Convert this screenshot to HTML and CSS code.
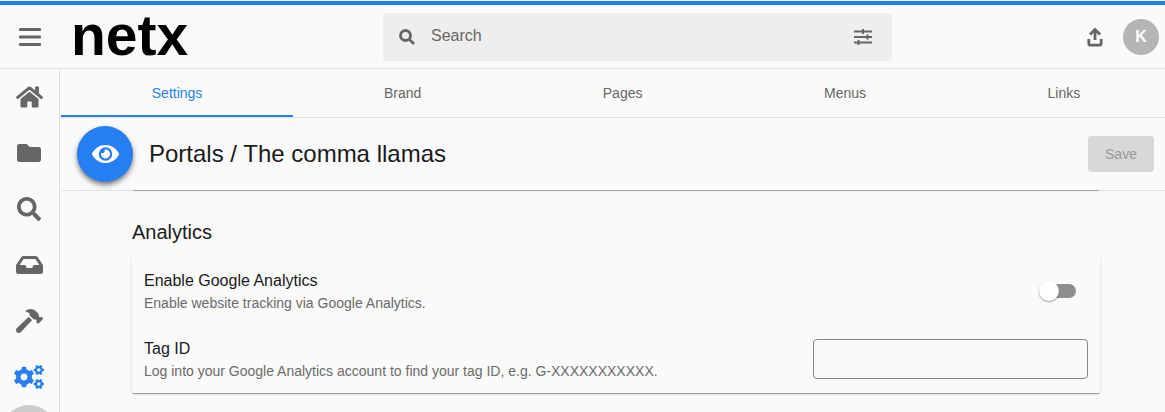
FILE: index.html
```html
<!DOCTYPE html>
<html lang="en">
<head>
    <meta charset="UTF-8">
    <meta name="viewport" content="width=device-width, initial-scale=1.0">
    <title>Portals / The comma llamas</title>
    <link rel="stylesheet" href="styles.css">
</head>
<body>
    <header class="topbar">
        <div class="brand">
            <button class="icon-btn menu-btn" aria-label="Menu">
                <svg width="22" height="20" viewBox="0 0 22 20"><rect y="1" width="22" height="3" rx="1"/><rect y="8.5" width="22" height="3" rx="1"/><rect y="16" width="22" height="3" rx="1"/></svg>
            </button>
            <a class="logo" href="#home">netx</a>
        </div>
        <div class="search">
            <svg class="search-icon" width="16" height="16" viewBox="0 0 16 16"><circle cx="6.500" cy="6.500" r="5"/><path d="M10.200 10.200l4.800 4.800"/></svg>
            <input type="text" placeholder="Search" aria-label="Search">
            <button class="icon-btn" aria-label="Filters">
                <svg width="18" height="16" viewBox="0 0 18 16"><path d="M0 1.500h18v2H0zM0 7h18v2H0zM0 12.500h18v2H0zM8 0h2v5H8zM12.500 5.500h2v5h-2zM3.500 11h2v5h-2z"/></svg>
            </button>
        </div>
        <div class="user">
            <button class="icon-btn" aria-label="Upload">
                <svg class="stroke-icon" width="16" height="20" viewBox="0 0 16 20"><path d="M8 13V3M3 7.500L8 2.500l5 5"/><path d="M1.800 12v4.200a2 2 0 0 0 2 2h8.400a2 2 0 0 0 2-2V12"/></svg>
            </button>
            <button class="avatar">K</button>
        </div>
    </header>
    <div class="layout">
        <nav class="sidebar">
            <a href="#home" aria-label="Home"><svg width="27" height="24" viewBox="0 0 576 512"><path d="M280.370 148.260L96 300.110V464a16 16 0 0 0 16 16l112.060-.29a16 16 0 0 0 15.920-16V368a16 16 0 0 1 16-16h64a16 16 0 0 1 16 16v95.640a16 16 0 0 0 16 16.050L464 480a16 16 0 0 0 16-16V300L295.670 148.260a12.190 12.190 0 0 0-15.300 0zM571.600 251.470L488 182.560V44.050a12 12 0 0 0-12-12h-56a12 12 0 0 0-12 12v72.610L318.470 43a48 48 0 0 0-61 0L4.340 251.470a12 12 0 0 0-1.600 16.900l25.500 31A12 12 0 0 0 45.150 301l235.220-193.740a12.190 12.190 0 0 1 15.300 0L530.900 301a12 12 0 0 0 16.900-1.600l25.500-31a12 12 0 0 0-1.700-16.930z"/></svg></a>
            <a href="#folders" aria-label="Folders"><svg width="24" height="24" viewBox="0 0 512 512"><path d="M464 128H272l-64-64H48C21.490 64 0 85.490 0 112v288c0 26.510 21.490 48 48 48h416c26.510 0 48-21.490 48-48V176c0-26.510-21.490-48-48-48z"/></svg></a>
            <a href="#search" aria-label="Search"><svg width="24" height="24" viewBox="0 0 512 512"><path d="M505 442.700L405.300 343c-4.500-4.500-10.600-7-17-7H372c27.600-35.300 44-79.700 44-128C416 93.100 322.900 0 208 0S0 93.100 0 208s93.100 208 208 208c48.300 0 92.700-16.400 128-44v16.300c0 6.400 2.500 12.500 7 17l99.700 99.700c9.400 9.400 24.600 9.400 33.900 0l28.300-28.300c9.400-9.400 9.400-24.600.1-34zM208 336c-70.700 0-128-57.200-128-128 0-70.700 57.200-128 128-128 70.700 0 128 57.200 128 128 0 70.700-57.200 128-128 128z"/></svg></a>
            <a href="#inbox" aria-label="Inbox"><svg width="27" height="24" viewBox="0 0 576 512"><path d="M567.938 243.908L462.250 85.374A48.003 48.003 0 0 0 422.311 64H153.689a48 48 0 0 0-39.938 21.374L8.062 243.908A47.994 47.994 0 0 0 0 270.533V400c0 26.510 21.490 48 48 48h480c26.510 0 48-21.490 48-48V270.533a47.994 47.994 0 0 0-8.062-26.625zM162.252 128h251.497l85.333 128H376l-32 64H232l-32-64H76.918l85.334-128z"/></svg></a>
            <a href="#tools" aria-label="Tools"><svg width="27" height="24" viewBox="0 0 576 512"><path d="M571.310 193.940l-22.630-22.630c-6.250-6.250-16.380-6.250-22.630 0l-11.310 11.310-28.900-28.900c5.630-21.310.36-44.900-16.350-61.610l-45.250-45.250c-62.480-62.480-163.790-62.480-226.280 0l90.510 45.250v18.750c0 16.970 6.740 33.250 18.750 45.250l49.140 49.140c16.710 16.710 40.300 21.980 61.610 16.350l28.900 28.900-11.310 11.310c-6.250 6.250-6.250 16.380 0 22.630l22.630 22.630c6.250 6.250 16.380 6.250 22.630 0l90.510-90.510c6.230-6.240 6.230-16.370-.02-22.620zm-286.720-15.200c-3.700-3.700-6.840-7.790-9.850-11.950L19.640 404.960c-25.570 23.880-26.260 64.190-1.530 88.930s65.050 24.050 88.920-1.530l238.130-255.070c-3.960-2.910-7.900-5.870-11.440-9.410l-49.130-49.140z"/></svg></a>
            <a href="#settings" class="active" aria-label="Settings">
                <svg width="30" height="24" viewBox="0 0 30 24">
                    <defs>
                        <g id="gear">
                            <circle r="5.700" fill="none" stroke="currentColor" stroke-width="4.600"/>
                            <path id="teeth" d="M-2.600-6.500L-2.100-10.300H2.100L2.600-6.500zM-2.600 6.500L-2.100 10.300H2.100L2.600 6.500z"/>
                            <use href="#teeth" transform="rotate(60)"/>
                            <use href="#teeth" transform="rotate(120)"/>
                        </g>
                    </defs>
                    <use href="#gear" transform="translate(10 12)"/>
                    <use href="#gear" transform="translate(24.800 5) rotate(30) scale(.5)"/>
                    <use href="#gear" transform="translate(24.800 19) rotate(30) scale(.5)"/>
                </svg>
            </a>
            <a href="#profile" class="profile" aria-label="Profile"></a>
        </nav>
        <main class="main-content">
            <nav class="tabs">
                <a href="#tab-settings" class="active">Settings</a>
                <a href="#tab-brand">Brand</a>
                <a href="#tab-pages">Pages</a>
                <a href="#tab-menus">Menus</a>
                <a href="#tab-links">Links</a>
            </nav>
            <div class="title-bar">
                <button class="preview-btn" aria-label="Preview">
                    <svg width="27" height="24" viewBox="0 0 576 512"><path d="M572.520 241.400C518.290 135.590 410.930 64 288 64S57.680 135.640 3.480 241.410a32.350 32.350 0 0 0 0 29.190C57.710 376.410 165.070 448 288 448s230.320-71.640 284.520-177.410a32.350 32.350 0 0 0 0-29.190zM288 400a144 144 0 1 1 144-144 143.930 143.930 0 0 1-144 144zm0-240a95.310 95.310 0 0 0-25.310 3.790 47.850 47.850 0 0 1-66.900 66.900A95.780 95.780 0 1 0 288 160z"/></svg>
                </button>
                <h1>Portals / The comma llamas</h1>
                <button class="save-btn" disabled>Save</button>
            </div>
            <div class="content">
                <!-- end of the section scrolled under the title bar -->
                <div class="card card-above"></div>
                <h2>Analytics</h2>
                <div class="card">
                    <div class="row">
                        <div>
                            <label for="enableAnalytics">Enable Google Analytics</label>
                            <p>Enable website tracking via Google Analytics.</p>
                        </div>
                        <input type="checkbox" id="enableAnalytics" class="toggle">
                    </div>
                    <div class="row">
                        <div>
                            <label for="tagId">Tag ID</label>
                            <p>Log into your Google Analytics account to find your tag ID, e.g. G-XXXXXXXXXXX.</p>
                        </div>
                        <input type="text" id="tagId" class="text-field">
                    </div>
                </div>
            </div>
        </main>
    </div>
</body>
</html>
```
FILE: styles.css
```css
* {
    box-sizing: border-box;
}

body {
    margin: 0;
    height: 100vh;
    display: flex;
    flex-direction: column;
    overflow: hidden;
    border-top: 1px solid white;
    background-color: #fafafa;
    color: #1a1a1a;
    font-family: "Liberation Sans", Arial, sans-serif;
    font-size: 14px;
}

svg {
    display: block;
    flex: none;
    fill: currentColor;
}

button, input {
    font-family: inherit;
    margin: 0;
}

h1, h2, p {
    margin: 0;
    font-weight: normal;
}

.topbar {
    flex: none;
    display: grid;
    grid-template-columns: 383fr 509fr 273fr;
    align-items: center;
    height: 68px;
    border-top: 4px solid #267ff2;
    border-bottom: 1px solid #e0e0e0;
    color: #666;
}

.icon-btn {
    padding: 0;
    border: none;
    background: none;
    color: inherit;
    cursor: pointer;
}

.brand {
    display: flex;
    align-items: center;
    gap: 30px;
    padding-left: 19px;
}

.logo {
    padding-bottom: 4px;
    color: black;
    font-size: 57px;
    font-weight: bold;
    line-height: 56px;
    text-decoration: none;
}

.search {
    display: flex;
    align-items: center;
    gap: 16px;
    height: 48px;
    padding: 0 20px 0 16px;
    border-radius: 4px;
    background-color: #eee;
}

.search input {
    flex: 1;
    min-width: 0;
    padding: 0 0 2px;
    border: none;
    outline: none;
    background: none;
    font-size: 16px;
}

.search input::placeholder {
    color: #666;
    opacity: 1;
}

.user {
    display: flex;
    align-items: center;
    justify-content: flex-end;
    gap: 20px;
    padding-right: 6px;
}

.stroke-icon,
.search-icon {
    fill: none;
    stroke: currentColor;
    stroke-width: 2.8;
}

.avatar {
    width: 36px;
    height: 36px;
    padding: 0;
    border: none;
    border-radius: 50%;
    background-color: #b5b5b5;
    color: white;
    font-size: 16px;
    font-weight: bold;
}

.layout {
    flex: 1;
    min-height: 0;
    display: flex;
    overflow: hidden;
}

.sidebar {
    flex: none;
    width: 60px;
    padding-right: 1px;
    border-right: 1px solid #e0e0e0;
}

.sidebar a {
    display: flex;
    align-items: center;
    justify-content: center;
    height: 56px;
    color: #666;
}

.sidebar a.active {
    color: #267ff2;
}

.sidebar a.profile {
    width: 56px;
    margin: 0 auto;
    border-radius: 50%;
    background-color: #ccc;
}

.main-content {
    flex: 1;
    margin: 0 -6px 0 1px;
    display: flex;
    flex-direction: column;
}

.tabs {
    flex: none;
    display: flex;
    height: 49px;
    border-bottom: 1px solid #e0e0e0;
}

.tabs a {
    flex: 1 1 auto;
    height: 48px;
    line-height: 48px;
    text-align: center;
    text-decoration: none;
    color: #666;
}

.tabs a.active {
    color: #267ff2;
    box-shadow: inset 0 -2px #267ff2;
}

.title-bar {
    flex: none;
    display: flex;
    align-items: center;
    gap: 16px;
    height: 72px;
    padding: 0 17px 0 16px;
}

.title-bar h1 {
    flex: 1;
    font-size: 24px;
}

.preview-btn {
    display: flex;
    align-items: center;
    justify-content: center;
    width: 56px;
    height: 56px;
    padding: 0;
    border: none;
    border-radius: 50%;
    background-color: #267ff2;
    color: white;
    box-shadow: 0 3px 5px -1px rgba(0,0,0,0.4), 0 3px 6px rgba(0,0,0,0.25);
    cursor: pointer;
}

.save-btn {
    min-width: 66px;
    height: 36px;
    padding: 0 16px;
    border: none;
    border-radius: 4px;
    background-color: #d8d8d8;
    color: #999;
    font-size: 14px;
}

.content {
    flex: 1;
    min-height: 0;
    overflow: hidden;
    padding: 0 71px;
    box-shadow: inset 0 1px #e0e0e0;
}

.content h2 {
    padding: 30px 0 13px;
    font-size: 20px;
    line-height: 24px;
}

.card {
    border-radius: 2px;
    background-color: #fafafa;
    box-shadow: 0 2px 1px -1px rgba(0,0,0,0.2), 0 1px 1px rgba(0,0,0,0.16), 0 1px 3px rgba(0,0,0,0.14);
}

.card-above {
    height: 16px;
    margin-top: -16px;
    box-shadow: 0 1px 1px rgba(0,0,0,0.3);
}

.row {
    display: flex;
    align-items: center;
    justify-content: space-between;
    gap: 24px;
    height: 68px;
    padding: 0 12px;
}

.row label {
    display: block;
    font-size: 16px;
    line-height: 24px;
}

.row p {
    color: #6b6b6b;
    line-height: 20px;
}

.toggle {
    appearance: none;
    display: flex;
    align-items: center;
    width: 36px;
    height: 14px;
    margin-right: 12px;
    border-radius: 7px;
    background-color: #8e8e8e;
    cursor: pointer;
}

.toggle::before {
    content: "";
    flex: none;
    width: 20px;
    height: 20px;
    margin-left: -1px;
    border-radius: 50%;
    background-color: white;
    box-shadow: 0 1px 2px rgba(0,0,0,0.4);
}

.toggle:checked {
    background-color: #267ff2;
    justify-content: flex-end;
}

.text-field {
    width: 275px;
    height: 40px;
    padding: 0 12px;
    border: 1px solid #888;
    border-radius: 4px;
    background: none;
    font-size: 16px;
}
```
